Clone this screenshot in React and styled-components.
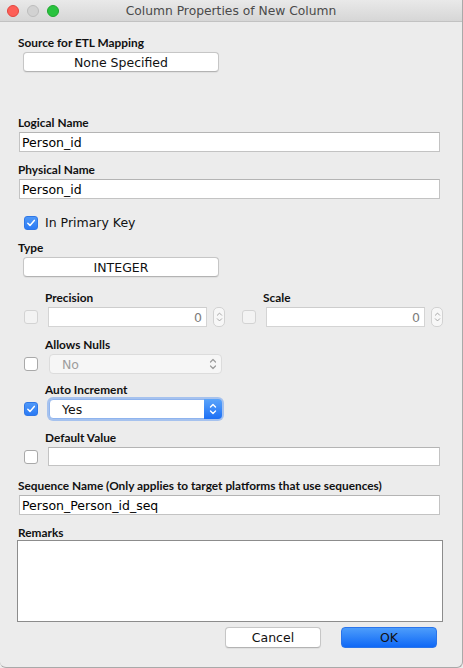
import React from "react";
import styled, { createGlobalStyle, css } from "styled-components";

const GlobalStyle = createGlobalStyle`
  html, body { margin: 0; padding: 0; background: #ececec; }
  body { font-family: "Lato", "DejaVu Sans", sans-serif; -webkit-font-smoothing: antialiased; }
  * { box-sizing: border-box; }
`;

const TEXT_FONT = `"DejaVu Sans", "Lato", sans-serif`;

const Window = styled.div`
  width: 463px;
  height: 668px;
  background: #ececec;
  border-right: 1px solid #a9a9a9;
  border-bottom: 1px solid #a9a9a9;
  border-radius: 0 0 6px 6px;
  display: flex;
  flex-direction: column;
  overflow: hidden;
`;

const TitleBar = styled.div`
  flex: none;
  height: 22px;
  display: grid;
  grid-template-columns: 1fr auto 1fr;
  align-items: center;
  background: linear-gradient(#e9e9e9, #d6d6d6);
  border-bottom: 1px solid #c2c2c2;
`;

const Lights = styled.div`
  display: flex;
  gap: 8px;
  padding-left: 7px;
`;

const Light = styled.span`
  width: 12px;
  height: 12px;
  border-radius: 50%;
  background: ${(p) => p.$fill};
  border: 0.5px solid ${(p) => p.$edge};
`;

const Title = styled.div`
  font-family: ${TEXT_FONT};
  font-size: 12.3px;
  color: #4a4a4a;
  white-space: nowrap;
`;

const Content = styled.div`
  flex: 1;
  display: flex;
  flex-direction: column;
  padding-left: 17px;
`;

const Label = styled.div`
  font-family: "Lato", sans-serif;
  font-weight: 700;
  font-size: 11.85px;
  line-height: 13px;
  height: 13px;
  color: #111;
  white-space: nowrap;
  margin-top: ${(p) => p.$top || 0}px;
  padding-left: ${(p) => p.$indent || 1}px;
`;

const PushButton = styled.div`
  height: ${(p) => p.$h || 20}px;
  width: ${(p) => p.$w}px;
  margin-top: ${(p) => p.$top || 0}px;
  margin-left: ${(p) => p.$left || 0}px;
  display: flex;
  align-items: center;
  justify-content: center;
  font-family: ${TEXT_FONT};
  font-size: 12.5px;
  color: #111;
  border-radius: 4px;
  ${(p) =>
    p.$primary
      ? css`
          background: linear-gradient(#4d9dfb, #0f68f6);
          border: 1px solid #2a74ea;
        `
      : css`
          background: #fff;
          border: 1px solid #c6c6c6;
          border-bottom-color: #b3b3b3;
          box-shadow: 0 0.5px 1px rgba(0, 0, 0, 0.06);
        `}
`;

const TextField = styled.div`
  height: ${(p) => p.$h || 20}px;
  width: ${(p) => p.$w}px;
  margin-top: ${(p) => p.$top || 0}px;
  margin-left: ${(p) => p.$left || 0}px;
  background: #fff;
  border: 1px solid ${(p) => (p.$muted ? "#d4d4d4" : "#c3c3c3")};
  border-top-color: ${(p) => (p.$muted ? "#cdcdcd" : "#b4b4b4")};
  display: flex;
  align-items: center;
  justify-content: ${(p) => (p.$right ? "flex-end" : "flex-start")};
  padding: 0 4px 0 2px;
  font-family: ${TEXT_FONT};
  font-size: 12.5px;
  color: ${(p) => (p.$muted ? "#7c7c7c" : "#000")};
  white-space: nowrap;
`;

const TextArea = styled.div`
  height: 82px;
  width: 426px;
  margin-top: 1px;
  background: #fff;
  border: 1px solid #8c8c8c;
`;

const Row = styled.div`
  display: flex;
  align-items: center;
  height: 14px;
  gap: ${(p) => p.$gap || 0}px;
  margin-top: ${(p) => p.$top || 0}px;
  margin-left: ${(p) => p.$left || 0}px;
`;

const Box = styled.span`
  flex: none;
  width: 14px;
  height: 14px;
  border-radius: 3px;
  display: flex;
  align-items: center;
  justify-content: center;
  ${(p) =>
    p.$checked
      ? css`
          background: linear-gradient(#4f98f8, #2a7af5);
          border: 1px solid #2f77e6;
        `
      : p.$disabled
      ? css`
          background: #f3f3f3;
          border: 1px solid #d3d3d3;
        `
      : css`
          background: #fff;
          border: 1px solid #a9a9a9;
        `}
`;

const CheckText = styled.span`
  font-family: ${TEXT_FONT};
  font-size: 12.5px;
  line-height: 14px;
  color: #111;
`;

const OptionGrid = styled.div`
  display: grid;
  grid-template-columns: 28px auto;
  row-gap: 3px;
  align-items: center;
  margin-top: ${(p) => p.$top || 0}px;
  margin-left: ${(p) => p.$left || 0}px;
`;

const OptionLabel = styled(Label)`
  grid-column: 2;
  padding-left: 0;
`;

const BoxCell = styled.div`
  grid-column: 1;
  padding-left: 7px;
  display: flex;
`;

const ControlCell = styled.div`
  grid-column: 2;
  display: flex;
  align-items: center;
  gap: 6px;
  padding-left: ${(p) => p.$pad ?? 3}px;
`;

const Pair = styled.div`
  display: flex;
  gap: 10px;
  margin-top: ${(p) => p.$top || 0}px;
`;

const Stepper = styled.span`
  width: 12px;
  height: 20px;
  border-radius: 5px;
  background: #f7f7f7;
  border: 1px solid #d2d2d2;
  display: flex;
  align-items: center;
  justify-content: center;
`;

const Select = styled.div`
  position: relative;
  width: 173px;
  height: 20px;
  border-radius: 4px;
  display: flex;
  align-items: center;
  padding-left: 12px;
  font-family: ${TEXT_FONT};
  font-size: 12.5px;
  ${(p) =>
    p.$disabled
      ? css`
          background: #f6f6f6;
          border: 1px solid #dcdcdc;
          color: #9d9d9d;
        `
      : css`
          background: #fff;
          border: 1px solid #8fb4ee;
          color: #111;
          box-shadow: 0 0 0 2px rgba(110, 160, 240, 0.55);
        `}
`;

const SelectArrow = styled.span`
  position: absolute;
  top: -1px;
  bottom: -1px;
  right: -1px;
  width: 18px;
  display: flex;
  align-items: center;
  justify-content: center;
  border-radius: 0 4px 4px 0;
  ${(p) =>
    p.$blue &&
    css`
      background: linear-gradient(#5aa4fa, #1c6ff5);
    `}
`;

const Footer = styled.div`
  display: flex;
  justify-content: flex-end;
  gap: 20px;
  margin-top: 5px;
  padding-right: 25px;
`;

const Check = () => (
  <svg width="10" height="10" viewBox="0 0 10 10">
    <path d="M1.8 5.2 L4 7.4 L8.3 2.4" fill="none" stroke="#fff" strokeWidth="1.5" strokeLinecap="round" strokeLinejoin="round" />
  </svg>
);

const UpDown = ({ color = "#8a8a8a", w = 8, h = 14, sw = 1.2 }) => (
  <svg width={w} height={h} viewBox="0 0 8 14">
    <path d="M1.5 5 L4 2.5 L6.5 5" fill="none" stroke={color} strokeWidth={sw} strokeLinecap="round" strokeLinejoin="round" />
    <path d="M1.5 9 L4 11.5 L6.5 9" fill="none" stroke={color} strokeWidth={sw} strokeLinecap="round" strokeLinejoin="round" />
  </svg>
);

function NumberOption({ label }) {
  return (
    <OptionGrid>
      <OptionLabel>{label}</OptionLabel>
      <BoxCell>
        <Box $disabled />
      </BoxCell>
      <ControlCell>
        <TextField $w={159} $muted $right>
          0
        </TextField>
        <Stepper>
          <UpDown color="#9b9b9b" w={7} h={14} sw={1} />
        </Stepper>
      </ControlCell>
    </OptionGrid>
  );
}

export default function App() {
  return (
    <>
      <GlobalStyle />
      <Window>
        <TitleBar>
          <Lights>
            <Light $fill="#fd5f57" $edge="#e2463f" />
            <Light $fill="#d2d2d2" $edge="#bdbdbd" />
            <Light $fill="#29c33f" $edge="#1fa72f" />
          </Lights>
          <Title>Column Properties of New Column</Title>
          <span />
        </TitleBar>
        <Content>
          <Label $top={14}>Source for ETL Mapping</Label>
          <PushButton $w={196} $top={3} $left={6}>None Specified</PushButton>

          <Label $top={44}>Logical Name</Label>
          <TextField $w={421} $top={3} $left={2}>Person_id</TextField>

          <Label $top={11}>Physical Name</Label>
          <TextField $w={421} $top={3} $left={2}>Person_id</TextField>

          <Row $top={17} $left={7} $gap={7}>
            <Box $checked>
              <Check />
            </Box>
            <CheckText>In Primary Key</CheckText>
          </Row>

          <Label $top={11}>Type</Label>
          <PushButton $w={196} $top={3} $left={6}>INTEGER</PushButton>

          <Pair $top={14}>
            <NumberOption label="Precision" />
            <NumberOption label="Scale" />
          </Pair>

          <OptionGrid $top={11}>
            <OptionLabel>Allows Nulls</OptionLabel>
            <BoxCell>
              <Box />
            </BoxCell>
            <ControlCell $pad={4}>
              <Select $disabled>
                No
                <SelectArrow>
                  <UpDown color="#9a9a9a" />
                </SelectArrow>
              </Select>
            </ControlCell>
          </OptionGrid>

          <OptionGrid $top={9}>
            <OptionLabel>Auto Increment</OptionLabel>
            <BoxCell>
              <Box $checked>
                <Check />
              </Box>
            </BoxCell>
            <ControlCell $pad={4}>
              <Select>
                Yes
                <SelectArrow $blue>
                  <UpDown color="#fff" sw={1.4} />
                </SelectArrow>
              </Select>
            </ControlCell>
          </OptionGrid>

          <OptionGrid $top={12}>
            <OptionLabel>Default Value</OptionLabel>
            <BoxCell>
              <Box />
            </BoxCell>
            <ControlCell>
              <TextField $w={392} $h={19} />
            </ControlCell>
          </OptionGrid>

          <Label $top={13}>Sequence Name (Only applies to target platforms that use sequences)</Label>
          <TextField $w={421} $top={3} $left={2}>Person_Person_id_seq</TextField>

          <Label $top={11}>Remarks</Label>
          <TextArea />

          <Footer>
            <PushButton $w={96} $h={21}>Cancel</PushButton>
            <PushButton $w={96} $h={21} $primary>OK</PushButton>
          </Footer>
        </Content>
      </Window>
    </>
  );
}
